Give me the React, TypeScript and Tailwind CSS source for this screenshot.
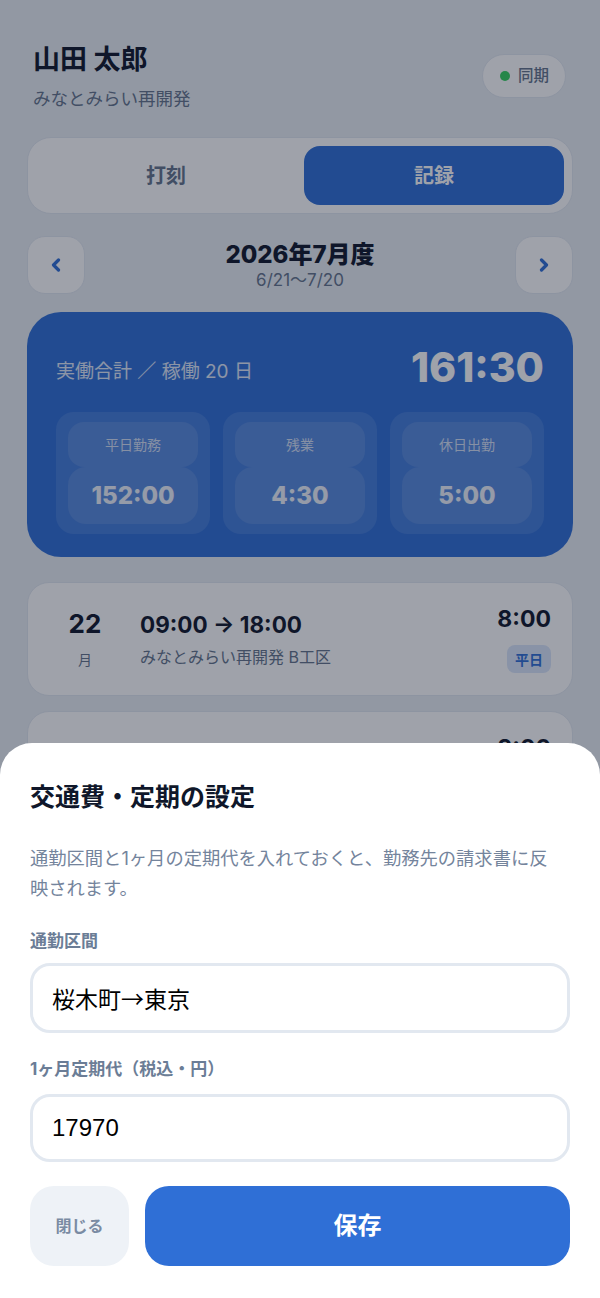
import React from "react";

const FONT = { fontFamily: '"Inter", "Noto Sans CJK JP", sans-serif' };
const INPUT_FONT = { fontFamily: '"Liberation Sans", "Noto Sans CJK JP", sans-serif' };
const INPUT_CJK_FONT = { fontFamily: '"Noto Sans CJK JP", "Liberation Sans", sans-serif' };

function Chevron({ dir }: { dir: "left" | "right" }) {
  return (
    <svg width="12" height="14" viewBox="0 0 12 14" fill="none">
      {dir === "left" ? (
        <path d="M8.5 2 L3.5 7 L8.5 12" stroke="#2f6fd6" strokeWidth="3.2" strokeLinecap="round" strokeLinejoin="round" />
      ) : (
        <path d="M3.5 2 L8.5 7 L3.5 12" stroke="#2f6fd6" strokeWidth="3.2" strokeLinecap="round" strokeLinejoin="round" />
      )}
    </svg>
  );
}

function Stat({ label, value }: { label: string; value: string }) {
  return (
    <div className="flex flex-col rounded-[18px] bg-white/10 px-[12px] py-[10px]">
      <div className="flex h-[45px] items-center justify-center rounded-[16px] bg-white/10 text-[14px] text-white/75">
        {label}
      </div>
      <div className="flex h-[57px] items-center justify-center rounded-[18px] bg-white/10 text-[24px] font-extrabold text-white/90">
        {value}
      </div>
    </div>
  );
}

function DayCard({ day, wd, time, place, total, kind }: { day: string; wd: string; time: string; place: string; total: string; kind: string }) {
  return (
    <div className="flex h-[114px] items-center rounded-[22px] border border-[#e2e8f0] bg-white pl-[28px] pr-[21px]">
      <div className="flex w-[58px] flex-col items-center">
        <div className="text-[26px] font-bold leading-[30px] text-[#0f172a]">{day}</div>
        <div className="mt-[11px] text-[14px] leading-[20px] text-[#64748b]">{wd}</div>
      </div>
      <div className="ml-[26px] flex flex-1 flex-col">
        <div className="text-[22.5px] font-bold leading-[30px] text-[#0f172a]">{time}</div>
        <div className="mt-[6px] text-[16px] leading-[22px] text-[#64748b]">{place}</div>
      </div>
      <div className="flex flex-col items-end">
        <div className="text-[23px] font-bold leading-[28px] text-[#0f172a]">{total}</div>
        <div className="mt-[12px] flex h-[28px] items-center rounded-[8px] bg-[#dbe7fb] px-[8px] text-[14px] font-bold text-[#2f6fd6]">
          {kind}
        </div>
      </div>
    </div>
  );
}

export default function App() {
  return (
    <div style={FONT} className="relative h-[1298px] w-full overflow-hidden bg-[#e9eef4]">
      <div className="px-[27px] pt-[42px]">
        {/* Header */}
        <div className="flex items-start justify-between pl-[6px] pr-[7px]">
          <div>
            <div className="text-[27px] font-bold leading-[36px] text-[#0f172a]">山田 太郎</div>
            <div className="mt-[9px] text-[17.5px] leading-[24px] text-[#64748b]">みなとみらい再開発</div>
          </div>
          <div className="mt-[12px] flex h-[44px] items-center gap-[8px] rounded-full border border-[#e2e8f0] bg-white pl-[17px] pr-[16px]">
            <span className="h-[10px] w-[10px] rounded-full bg-[#36d15f]" />
            <span className="text-[15.5px] font-medium text-[#64748b]">同期</span>
          </div>
        </div>

        {/* Segmented control */}
        <div className="mt-[26px] grid grid-cols-2 gap-[8px] rounded-[24px] border border-[#e2e8f0] bg-white p-[8px]">
          <div className="flex h-[59px] items-center justify-center rounded-[16px] text-[20px] font-bold text-[#64748b]">打刻</div>
          <div className="flex h-[59px] items-center justify-center rounded-[16px] bg-[#2f6fd6] text-[20px] font-bold text-white">記録</div>
        </div>

        {/* Month nav */}
        <div className="mt-[22px] flex items-center justify-between">
          <div className="flex h-[58px] w-[58px] items-center justify-center rounded-[18px] border border-[#e2e8f0] bg-white">
            <Chevron dir="left" />
          </div>
          <div className="flex flex-col items-center">
            <div className="text-[24px] font-extrabold leading-[30px] text-[#0f172a]">2026年7月度</div>
            <div className="text-[17px] leading-[20px] text-[#64748b]">6/21〜7/20</div>
          </div>
          <div className="flex h-[58px] w-[58px] items-center justify-center rounded-[18px] border border-[#e2e8f0] bg-white">
            <Chevron dir="right" />
          </div>
        </div>

        {/* Summary card */}
        <div className="mt-[18px] rounded-[34px] bg-[#2f6fd6] px-[29px] pb-[23px] pt-[31px]">
          <div className="flex items-center justify-between">
            <div className="mt-[10px] text-[19px] text-white/85">実働合計 ／ 稼働 20 日</div>
            <div className="text-[41px] font-extrabold leading-[48px] text-white">161:30</div>
          </div>
          <div className="mt-[21px] grid grid-cols-3 gap-[13px]">
            <Stat label="平日勤務" value="152:00" />
            <Stat label="残業" value="4:30" />
            <Stat label="休日出勤" value="5:00" />
          </div>
        </div>

        {/* Day list */}
        <div className="mt-[25px] flex flex-col gap-[15px]">
          <DayCard day="22" wd="月" time="09:00 → 18:00" place="みなとみらい再開発 B工区" total="8:00" kind="平日" />
          <DayCard day="23" wd="火" time="09:00 → 18:00" place="みなとみらい再開発 B工区" total="8:00" kind="平日" />
        </div>
      </div>

      {/* Overlay */}
      <div className="absolute inset-0 bg-[rgba(15,23,42,0.4)]" />

      {/* Bottom sheet */}
      <div className="absolute inset-x-0 bottom-0 rounded-t-[32px] bg-white px-[30px] pb-[32px] pt-[38px]">
        <div className="text-[25px] font-bold leading-[32px] text-[#0f172a]">交通費・定期の設定</div>
        <p className="mt-[30px] text-[18.3px] leading-[30px] text-[#74849c]">
          通勤区間と1ヶ月の定期代を入れておくと、勤務先の請求書に反
          <br />
          映されます。
        </p>
        <div className="mt-[26px] text-[17px] font-bold leading-[24px] text-[#6b7d96]">通勤区間</div>
        <div
          style={INPUT_CJK_FONT}
          className="mt-[10px] flex h-[70px] items-center rounded-[20px] border-[3px] border-[#e2e8f0] px-[19px] text-[23px] text-black"
        >
          桜木町→東京
        </div>
        <div className="mt-[24px] text-[17px] font-bold leading-[24px] text-[#6b7d96]">1ヶ月定期代（税込・円）</div>
        <div
          style={INPUT_FONT}
          className="mt-[13px] flex h-[68px] items-center rounded-[20px] border-[3px] border-[#e2e8f0] px-[19px] text-[24px] text-black"
        >
          17970
        </div>
        <div className="mt-[24px] flex gap-[16px]">
          <div className="flex h-[80px] w-[99px] items-center justify-center rounded-[24px] bg-[#eef2f7] text-[16px] font-bold text-[#7a8ba3]">
            閉じる
          </div>
          <div className="flex h-[80px] flex-1 items-center justify-center rounded-[24px] bg-[#2f6fd6] text-[24px] font-bold text-white">
            保存
          </div>
        </div>
      </div>
    </div>
  );
}
